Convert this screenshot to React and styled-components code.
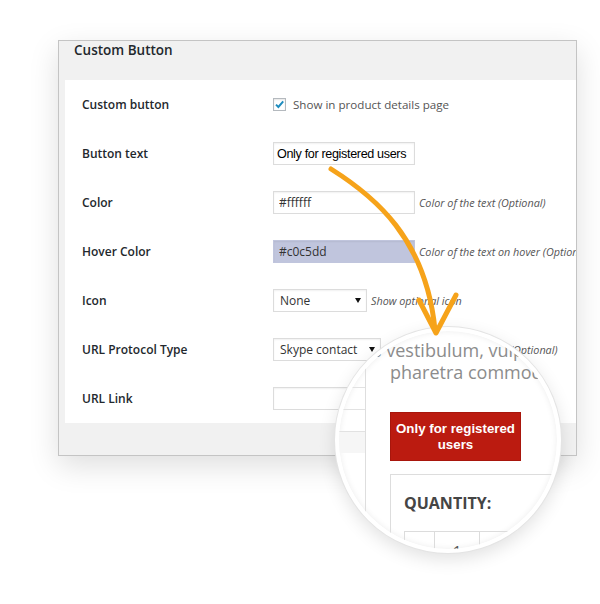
import React from "react";
import styled, { createGlobalStyle } from "styled-components";

const GlobalStyle = createGlobalStyle`
  html, body {
    margin: 0;
    padding: 0;
    background: #fff;
    font-family: "Open Sans", "Liberation Sans", sans-serif;
  }
`;

const Page = styled.div`
  position: relative;
  width: 600px;
  height: 604px;
  padding: 40px 0 0 58px;
  box-sizing: border-box;
  overflow: hidden;
`;

const Card = styled.div`
  width: 519px;
  height: 416px;
  box-sizing: border-box;
  border: 1px solid #c4c4c4;
  background: #f1f1f1;
  box-shadow: 0 10px 28px rgba(0, 0, 0, 0.13);
  display: flex;
  flex-direction: column;
`;

const CardTitle = styled.h2`
  margin: 0;
  height: 39px;
  padding: 0 0 0 15px;
  font-size: 13.5px;
  line-height: 18px;
  font-weight: 600;
  color: #23282d;
`;

const Panel = styled.div`
  margin-left: 6px;
  height: 343px;
  background: #fff;
  padding-left: 17px;
  overflow: hidden;
`;

const Row = styled.div`
  display: grid;
  grid-template-columns: 191px 1fr;
  align-items: center;
  height: 49px;
`;

const Label = styled.div`
  font-size: 12px;
  font-weight: 600;
  color: #23282d;
`;

const Field = styled.div`
  display: flex;
  align-items: center;
  white-space: nowrap;
`;

const CheckBox = styled.span`
  width: 13px;
  height: 13px;
  box-sizing: border-box;
  border: 1px solid #b4b9be;
  box-shadow: inset 0 1px 2px rgba(0, 0, 0, 0.1);
  background: #fff;
  display: flex;
  align-items: center;
  justify-content: center;
  margin-right: 7px;
`;

const CheckText = styled.span`
  font-size: 11.6px;
  color: #555;
`;

const Input = styled.input`
  width: ${(p) => p.$w || 142}px;
  height: 23px;
  box-sizing: border-box;
  margin: 0;
  border: 1px solid ${(p) => (p.$bg ? p.$bg : "#dcdcdc")};
  background: ${(p) => p.$bg || "#fff"};
  box-shadow: inset 0 1px 2px rgba(0, 0, 0, 0.06);
  outline: none;
  font-family: ${(p) => (p.$plain ? '"Liberation Sans", Arial, sans-serif' : '"Open Sans", sans-serif')};
  font-size: ${(p) => (p.$plain ? "12.6px" : "12px")};
  letter-spacing: ${(p) => (p.$plain ? "-0.35px" : "0")};
  color: ${(p) => (p.$plain ? "#000" : "#333")};
  padding: ${(p) => (p.$plain ? "0 0 0 3px" : "0 5px")};
`;

const Select = styled.div`
  width: ${(p) => p.$w}px;
  height: 23px;
  box-sizing: border-box;
  border: 1px solid #dcdcdc;
  box-shadow: inset 0 1px 2px rgba(0, 0, 0, 0.06);
  padding: 0 5px 0 6px;
  display: flex;
  align-items: center;
  justify-content: space-between;
  font-size: 12px;
  color: #333;
`;

const Caret = styled.span`
  width: 0;
  height: 0;
  border-left: 3px solid transparent;
  border-right: 3px solid transparent;
  border-top: 5px solid #111;
`;

const Hint = styled.span`
  margin-left: 4px;
  font-size: 10.8px;
  font-style: italic;
  color: #555;
`;

const Magnifier = styled.div`
  position: absolute;
  left: 335px;
  top: 327px;
  width: 226px;
  height: 226px;
  box-sizing: border-box;
  border-radius: 50%;
  border: 4px solid #fff;
  background: #fff;
  overflow: hidden;
  display: flex;
  z-index: 2;
  box-shadow: 0 0 0 1px #e4e4e4, 0 6px 18px rgba(0, 0, 0, 0.12),
    inset 0 0 6px rgba(0, 0, 0, 0.08);
`;

const LeftStrip = styled.div`
  flex: 0 0 26px;
  border-right: 1px solid #dedede;
  display: flex;
  flex-direction: column;
  padding-top: 56px;
`;

const StripLine = styled.div`
  height: 21px;
  border-top: 1px solid #e2e2e2;
  background: ${(p) => (p.$grey ? "#f6f6f6" : "transparent")};
`;

const ProductCol = styled.div`
  flex: 1;
  padding: 8px 0 0 24px;
  min-width: 0;
`;

const Blurb = styled.p`
  margin: 0;
  font-size: 18px;
  line-height: 22px;
  color: #8c8c8c;
  white-space: nowrap;
  text-indent: ${(p) => p.$indent || 0}px;
`;

const RedButton = styled.div`
  margin-top: 29px;
  width: 131px;
  height: 49px;
  box-sizing: border-box;
  background: #bb1b10;
  border: 1px solid #a8160c;
  display: flex;
  align-items: center;
  justify-content: center;
  text-align: center;
  font-family: "Liberation Sans", Arial, sans-serif;
  font-weight: 700;
  font-size: 13.3px;
  line-height: 16px;
  color: #fff;
`;

const QtyBox = styled.div`
  margin-top: 13px;
  width: 220px;
  border: 1px solid #dddddd;
  padding: 17px 0 0 13px;
  height: 120px;
`;

const QtyTitle = styled.div`
  font-size: 16px;
  font-weight: 700;
  line-height: 22px;
  color: #454545;
`;

const QtyTable = styled.div`
  margin-top: 17px;
  display: flex;
`;

const QtyCell = styled.div`
  width: ${(p) => p.$w}px;
  height: 40px;
  border: 1px solid #dcdcdc;
  border-right: none;
  display: flex;
  align-items: center;
  justify-content: center;
  font-size: 16px;
  color: #555;
`;

const ArrowLayer = styled.svg`
  position: absolute;
  left: 0;
  top: 0;
  z-index: 3;
  pointer-events: none;
`;

const rows = [
  { label: "Custom button", kind: "check" },
  { label: "Button text", kind: "plain", value: "Only for registered users" },
  { label: "Color", kind: "input", value: "#ffffff", hint: "Color of the text (Optional)" },
  {
    label: "Hover Color",
    kind: "input",
    value: "#c0c5dd",
    bg: "#c0c5dd",
    hint: "Color of the text on hover (Optional)",
  },
  { label: "Icon", kind: "select", value: "None", w: 94, hint: "Show optional icon" },
  {
    label: "URL Protocol Type",
    kind: "select",
    value: "Skype contact",
    w: 108,
    hint: "Type of protocol for a link (Optional)",
  },
  { label: "URL Link", kind: "input", value: "" },
];

function renderField(r) {
  if (r.kind === "check") {
    return (
      <>
        <CheckBox>
          <svg width="11" height="11" viewBox="0 0 11 11">
            <path d="M2 5.6 L4.4 8 L9.2 2.4" fill="none" stroke="#1e8cbe" strokeWidth="2" />
          </svg>
        </CheckBox>
        <CheckText>Show in product details page</CheckText>
      </>
    );
  }
  if (r.kind === "select") {
    return (
      <>
        <Select $w={r.w}>
          {r.value}
          <Caret />
        </Select>
        {r.hint && <Hint>{r.hint}</Hint>}
      </>
    );
  }
  return (
    <>
      <Input readOnly value={r.value} $plain={r.kind === "plain"} $bg={r.bg} />
      {r.hint && <Hint>{r.hint}</Hint>}
    </>
  );
}

export default function App() {
  return (
    <>
      <GlobalStyle />
      <Page>
        <Card>
          <CardTitle>Custom Button</CardTitle>
          <Panel>
            {rows.map((r) => (
              <Row key={r.label}>
                <Label>{r.label}</Label>
                <Field>{renderField(r)}</Field>
              </Row>
            ))}
          </Panel>
        </Card>

        <Magnifier>
          <LeftStrip>
            <StripLine />
            <StripLine />
            <StripLine $grey />
          </LeftStrip>
          <ProductCol>
            <Blurb $indent={-17}>s vestibulum, vulputate</Blurb>
            <Blurb>pharetra commodo</Blurb>
            <RedButton>
              Only for registered
              <br />
              users
            </RedButton>
            <QtyBox>
              <QtyTitle>QUANTITY:</QtyTitle>
              <QtyTable>
                <QtyCell $w={29} />
                <QtyCell $w={44}>1</QtyCell>
                <QtyCell $w={44} />
              </QtyTable>
            </QtyBox>
          </ProductCol>
        </Magnifier>

        <ArrowLayer width="600" height="604" viewBox="0 0 600 604">
          <path
            d="M331 169 C 374 196, 426 238, 435 330"
            fill="none"
            stroke="#f6a31a"
            strokeWidth="5"
            strokeLinecap="round"
          />
          <path
            d="M419 300 L436 333 L456 295"
            fill="none"
            stroke="#f6a31a"
            strokeWidth="5"
            strokeLinecap="round"
            strokeLinejoin="round"
          />
        </ArrowLayer>
      </Page>
    </>
  );
}
